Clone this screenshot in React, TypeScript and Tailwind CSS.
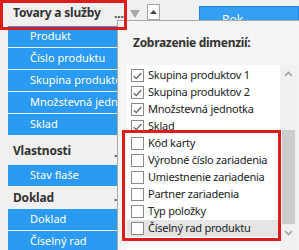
import React from 'react';

const font = { fontFamily: '"Noto Sans", "DejaVu Sans", sans-serif' };

const sections = [
  { title: 'Tovary a služby', h: 'h-[26px]', items: ['Produkt', 'Číslo produktu', 'Skupina produktov', 'Množstevná jednotka', 'Sklad'] },
  { title: 'Vlastnosti', h: 'h-[29px]', items: ['Stav flaše'] },
  { title: 'Doklad', h: 'h-[22px]', items: ['Doklad', 'Číselný rad'] },
];

const dims = [
  { label: 'Skupina produktov 1', checked: true },
  { label: 'Skupina produktov 2', checked: true },
  { label: 'Množstevná jednotka', checked: true },
  { label: 'Sklad', checked: true },
  { label: 'Kód karty', checked: false },
  { label: 'Výrobné číslo zariadenia', checked: false },
  { label: 'Umiestnenie zariadenia', checked: false },
  { label: 'Partner zariadenia', checked: false },
  { label: 'Typ položky', checked: false },
  { label: 'Číselný rad produktu', checked: false, active: true },
];

const Check = ({ checked }: { checked: boolean }) => (
  <div className="w-[13px] h-[13px] border border-[#8a8a8a] bg-white flex items-center justify-center shrink-0">
    {checked && (
      <svg width="9" height="8" viewBox="0 0 9 8">
        <polyline points="0.8,4.2 3.3,6.6 8.2,1" fill="none" stroke="#5e5e5e" strokeWidth="1.2" />
      </svg>
    )}
  </div>
);

const Chevron = ({ up }: { up?: boolean }) => (
  <svg width="9" height="6" viewBox="0 0 9 6">
    <polyline
      points={up ? '1,5 4.5,1.5 8,5' : '1,1 4.5,4.5 8,1'}
      fill="none"
      stroke="#a3a3a3"
      strokeWidth="1.6"
    />
  </svg>
);

export default function App() {
  return (
    <div className="relative w-[299px] h-[250px] overflow-hidden bg-[#f0f0f0] text-[#222]" style={font}>
      <div className="flex">
        {/* left dimension tree */}
        <div className="w-[117px] shrink-0 flex flex-col">
          {sections.map((s) => (
            <div key={s.title}>
              <div className={`${s.h} flex items-center pl-[13px]`}>
                <span className="text-[12px] font-bold tracking-[-0.2px] text-[#333] whitespace-nowrap">{s.title}</span>
                <span className="ml-auto mr-[-7px] text-[12px] font-bold text-[#444] leading-none self-end pb-[6px]">...</span>
              </div>
              {s.items.map((it) => (
                <div
                  key={it}
                  className="ml-[8px] h-[21px] mb-[1px] bg-[#2a9af3] text-white text-[11px] pl-[22px] flex items-center whitespace-nowrap overflow-hidden"
                >
                  {it}
                </div>
              ))}
            </div>
          ))}
        </div>

        {/* toolbar */}
        <div className="flex-1 flex items-start pt-[4px]">
          <svg className="ml-[13px] mt-[6px]" width="10" height="8" viewBox="0 0 10 8">
            <polygon points="0,0 10,0 5,8" fill="#a8a8a8" />
          </svg>
          <div className="ml-[7px] w-[13px] h-[16px] border border-[#a6a6a6] bg-white flex items-center justify-center">
            <svg width="7" height="4" viewBox="0 0 7 4">
              <polygon points="0,4 7,4 3.5,0" fill="#444" />
            </svg>
          </div>
          <div className="ml-[39px] mt-[2px] w-[100px] h-[28px] bg-[#33a0f5] border border-[#1a84e0] text-white text-[12px] pl-[22px] flex items-center">
            Rok
          </div>
        </div>
      </div>

      {/* dimension popup */}
      <div className="absolute left-[117px] top-[20px] right-0 bottom-0 bg-[#f5f5f5] border-l border-t border-[#a9a9a9] flex flex-col">
        <div className="pl-[15px] pt-[14px] h-[30px] text-[12px] font-bold tracking-[-0.3px] text-[#333] leading-[16px]">Zobrazenie dimenzií:</div>
        <div className="mt-[14px] ml-[9px] flex flex-1">
          <div className="w-[153px] bg-white pt-[2px]">
            {dims.map((d) => (
              <div
                key={d.label}
                className={`h-[17px] flex items-center pl-[4px] gap-[4px] text-[11px] tracking-[-0.25px] whitespace-nowrap ${d.active ? 'bg-[#e5e5e5]' : ''}`}
              >
                <Check checked={d.checked} />
                <span>{d.label}</span>
              </div>
            ))}
          </div>
          <div className="w-[17px] bg-[#f0f0f0] flex flex-col items-center">
            <div className="h-[17px] flex items-center justify-center">
              <Chevron up />
            </div>
            <div className="mt-[48px] w-[13px] h-[94px] bg-[#cdcdcd]" />
            <div className="h-[17px] flex items-center justify-center">
              <Chevron />
            </div>
          </div>
        </div>
      </div>

      {/* highlight frames */}
      <div className="absolute left-0 top-0 w-[127px] h-[30px] border-[3px] border-[#e01b1b]" />
      <div className="absolute left-[122px] top-[130px] w-[159px] h-[111px] border-[3px] border-[#e01b1b]" />
    </div>
  );
}
